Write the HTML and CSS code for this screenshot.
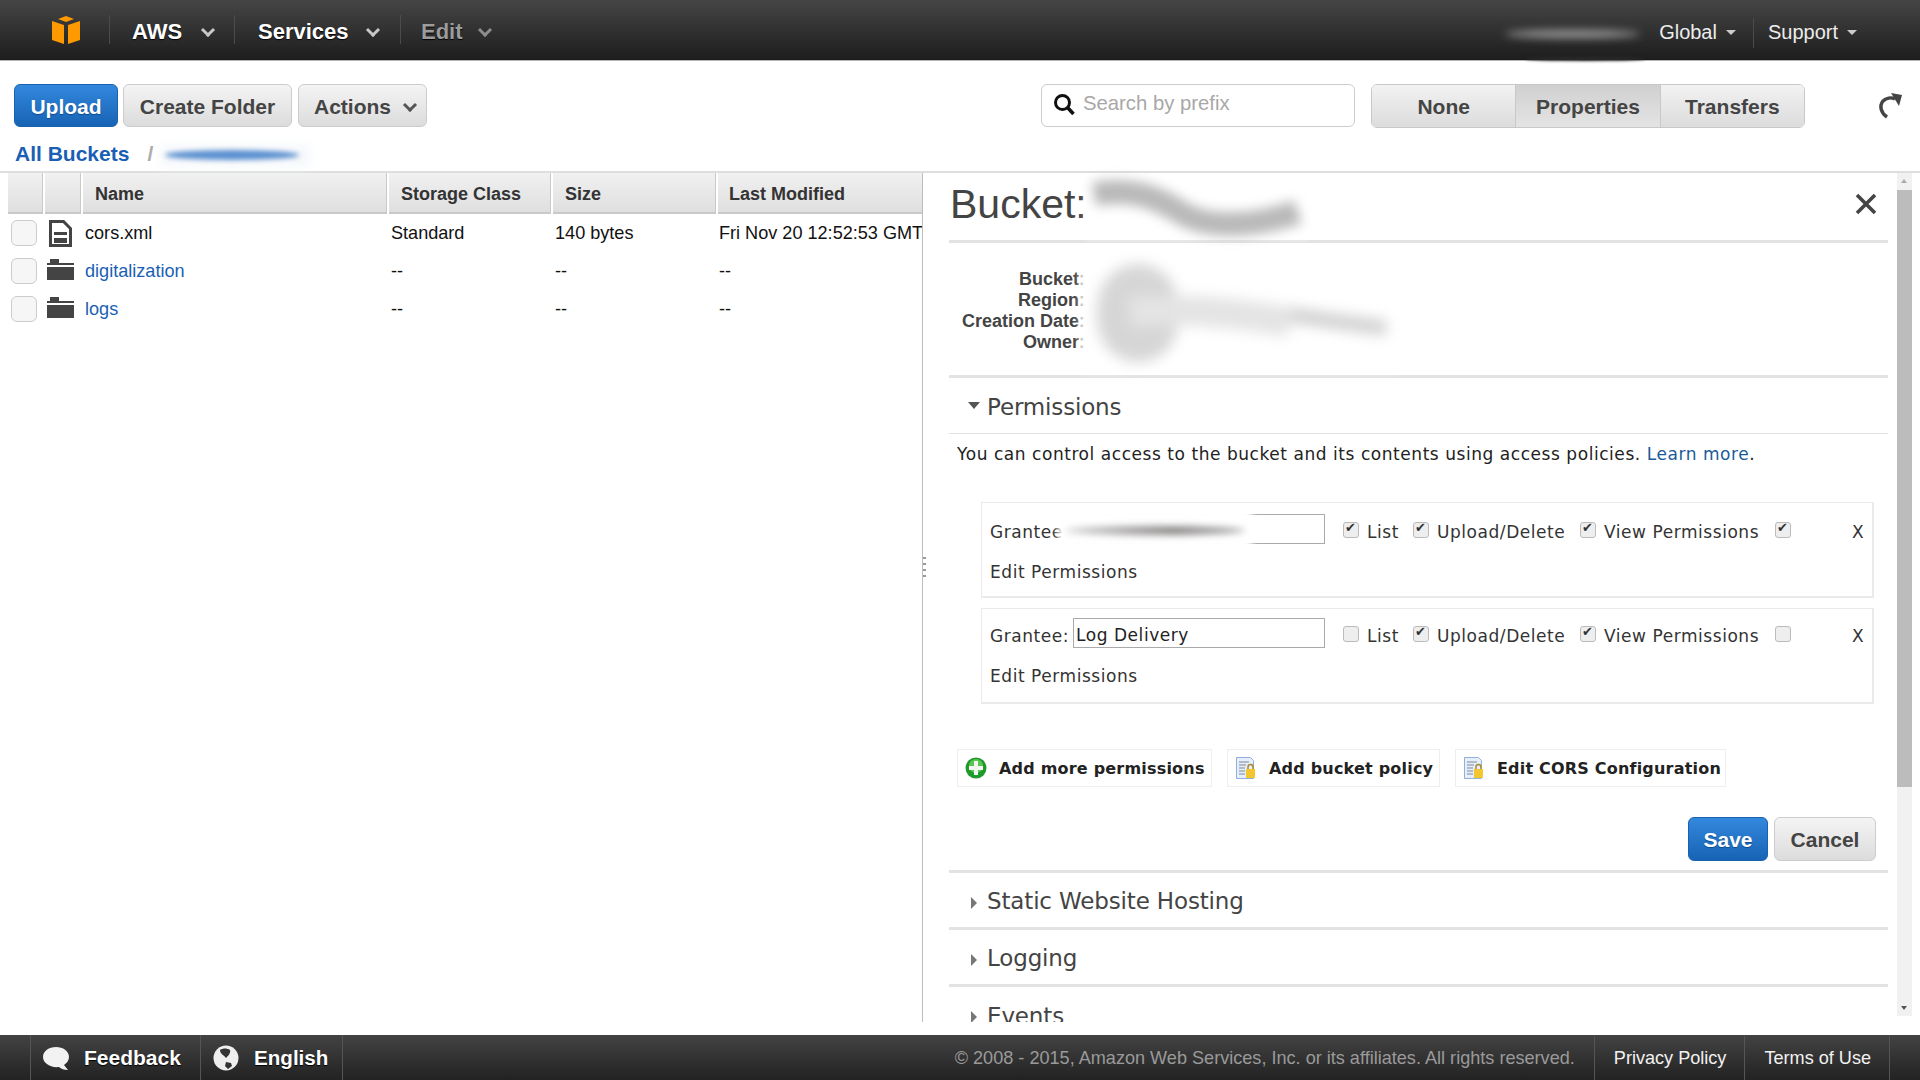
FILE: index.html
```html
<!DOCTYPE html>
<html lang="en">
<head>
    <meta charset="UTF-8">
    <title>S3 Management Console</title>
    <link rel="stylesheet" href="styles.css">
</head>
<body>

<header class="topnav">
    <div class="logo-cell">
        <svg width="32" height="32" viewBox="0 0 32 32"><path d="M8 5 16 2l8 3-8 3z" fill="#f90"/><path d="M2 7 14 11v19L2 26z" fill="#f90"/><path d="M30 7 18 11v19l12-4z" fill="#f90"/></svg>
    </div>
    <div class="nav-item nav-aws">AWS <span class="chev"></span></div>
    <div class="nav-item nav-services">Services <span class="chev"></span></div>
    <div class="nav-item nav-edit">Edit <span class="chev"></span></div>
    <div class="nav-right">
        <div class="nav-small">Global <span class="tri"></span></div>
        <div class="nav-small nav-support">Support <span class="tri"></span></div>
    </div>
</header>

<section class="toolbar">
    <button class="btn btn-blue btn-upload">Upload</button>
    <button class="btn btn-folder">Create Folder</button>
    <button class="btn btn-actions">Actions <span class="chev chev-dark"></span></button>
    <div class="search">
        <svg width="24" height="24" viewBox="0 0 24 24"><circle cx="10.5" cy="10.5" r="7" fill="none" stroke="#111" stroke-width="3"/><path d="m15.5 15.5 6 6.5" stroke="#111" stroke-width="3.5"/></svg>
        <span>Search by prefix</span>
    </div>
    <div class="segmented">
        <div class="seg">None</div>
        <div class="seg seg-on">Properties</div>
        <div class="seg">Transfers</div>
    </div>
    <svg class="refresh" width="26" height="28" viewBox="0 0 26 28"><path d="M10 25C4 21 2 14 6 9c3-3 8-4 12-2" fill="none" stroke="#444" stroke-width="3.5"/><path d="M14 1 25 3l-3 11z" fill="#444"/></svg>
</section>

<div class="crumbs"><a>All Buckets</a><span class="crumb-sep">/</span></div>

<main class="split">
    <section class="files">
        <div class="thead">
            <div></div><div></div>
            <div class="th-name">Name</div>
            <div class="th-pad">Storage Class</div>
            <div class="th-pad">Size</div>
            <div class="th-pad th-last">Last Modified</div>
        </div>
        <div class="row">
            <span class="rowcheck"></span>
            <svg width="23" height="27" viewBox="0 0 23 27"><path d="M1.5 1.5h13l7 7v17h-20z" fill="#fff" stroke="#444" stroke-width="3"/><path d="M5 12h13v3H5zM5 18h13v5H5z" fill="#444"/></svg>
            <div>cors.xml</div>
            <div>Standard</div>
            <div>140 bytes</div>
            <div>Fri Nov 20 12:52:53 GMT</div>
        </div>
        <div class="row">
            <span class="rowcheck"></span>
            <svg class="folder" width="27" height="21" viewBox="0 0 27 21"><path d="M0 4h3V0h9v4h15v2H0zM0 8h27v13H0z" fill="#444"/></svg>
            <div><a>digitalization</a></div>
            <div>--</div>
            <div>--</div>
            <div>--</div>
        </div>
        <div class="row">
            <span class="rowcheck"></span>
            <svg class="folder" width="27" height="21" viewBox="0 0 27 21"><path d="M0 4h3V0h9v4h15v2H0zM0 8h27v13H0z" fill="#444"/></svg>
            <div><a>logs</a></div>
            <div>--</div>
            <div>--</div>
            <div>--</div>
        </div>
    </section>

    <section class="panel">
        <div class="panel-body">
            <div class="panel-head">
                <h1>Bucket:</h1>
                <svg class="close" width="22" height="22" viewBox="0 0 22 22"><path d="m2 2 18 18M20 2 2 20" stroke="#444" stroke-width="3.6"/></svg>
            </div>
            <div class="info">
                <div>Bucket:</div>
                <div>Region:</div>
                <div>Creation Date:</div>
                <div>Owner:</div>
            </div>
            <div class="sect-title sect-open"><span class="tri-down"></span>Permissions</div>
            <p class="intro">You can control access to the bucket and its contents using access policies. <a>Learn more</a>.</p>

            <div class="grantee grantee-first">
                <div class="grantee-line">
                    <label class="g-label">Grantee:</label>
                    <input class="g-input" type="text" value="">
                    <input type="checkbox" class="cb cb-list" checked><span class="g-opt g-list">List</span>
                    <input type="checkbox" class="cb" checked><span class="g-opt g-upload">Upload/Delete</span>
                    <input type="checkbox" class="cb" checked><span class="g-opt g-view">View Permissions</span>
                    <input type="checkbox" class="cb" checked>
                    <span class="g-x">X</span>
                </div>
                <div class="edit-perm">Edit Permissions</div>
            </div>
            <div class="grantee">
                <div class="grantee-line">
                    <label class="g-label">Grantee:</label>
                    <input class="g-input" type="text" value="Log Delivery">
                    <input type="checkbox" class="cb cb-list"><span class="g-opt g-list">List</span>
                    <input type="checkbox" class="cb" checked><span class="g-opt g-upload">Upload/Delete</span>
                    <input type="checkbox" class="cb" checked><span class="g-opt g-view">View Permissions</span>
                    <input type="checkbox" class="cb">
                    <span class="g-x">X</span>
                </div>
                <div class="edit-perm">Edit Permissions</div>
            </div>

            <div class="perm-actions">
                <div class="perm-btn pb-add">
                    <svg width="22" height="22" viewBox="0 0 22 22"><circle cx="11" cy="11" r="10.5" fill="#1f9a2c"/><circle cx="11" cy="9" r="7" fill="#5cc552"/><path d="M9 4h4v5h5v4h-5v5H9v-5H4V9h5z" fill="#f2f7ef"/></svg>
                    Add more permissions
                </div>
                <div class="perm-btn pb-policy">
                    <svg width="22" height="24" viewBox="0 0 22 24"><path d="M1.5 1.5h14l3 3v18h-17z" fill="#e6eefa" stroke="#8fb0de"/><path d="M4 6h10M4 9h7M4 12h6M4 15h6M4 18h6" stroke="#7c8898"/><path d="M13 13v-2a2.5 2.5 0 0 1 5 0v2" fill="none" stroke="#a98a2c" stroke-width="1.5"/><path d="M11 13h9v9h-9z" fill="#f3c52e"/></svg>
                    Add bucket policy
                </div>
                <div class="perm-btn pb-cors">
                    <svg width="22" height="24" viewBox="0 0 22 24"><path d="M1.5 1.5h14l3 3v18h-17z" fill="#e6eefa" stroke="#8fb0de"/><path d="M4 6h10M4 9h7M4 12h6M4 15h6M4 18h6" stroke="#7c8898"/><path d="M13 13v-2a2.5 2.5 0 0 1 5 0v2" fill="none" stroke="#a98a2c" stroke-width="1.5"/><path d="M11 13h9v9h-9z" fill="#f3c52e"/></svg>
                    Edit CORS Configuration
                </div>
            </div>

            <div class="save-row">
                <button class="btn btn-blue btn-save">Save</button>
                <button class="btn btn-cancel">Cancel</button>
            </div>

            <div class="sect-title sect-closed"><span class="tri-right"></span>Static Website Hosting</div>
            <div class="sect-title sect-closed"><span class="tri-right"></span>Logging</div>
            <div class="sect-title sect-closed sect-last"><span class="tri-right"></span>Events</div>
        </div>
        <div class="scrollbar">
            <span class="sb-up"></span>
            <div class="sb-thumb"></div>
            <span class="sb-down"></span>
        </div>
    </section>
</main>

<footer class="foot">
    <div class="foot-item foot-feedback">
        <svg width="27" height="25" viewBox="0 0 27 25"><path d="M13 1c7 0 13 4 13 10 0 3-2 6-5 8l4 5c-4 0-7-1-9-3-9 1-16-4-16-10C0 5 6 1 13 1z" fill="#f2f2f2"/></svg>
        Feedback
    </div>
    <div class="foot-item foot-lang">
        <svg width="26" height="26" viewBox="0 0 26 26"><circle cx="13" cy="13" r="12.5" fill="#eee"/><path d="M7 5c3-2 7-2 10 0 1 3-2 6-4 8-2-3-6-4-6-8zM13 17l5 1 1 3-4 3-3-3z" fill="#333"/></svg>
        English
    </div>
    <div class="foot-right">
        <div class="copy">© 2008 - 2015, Amazon Web Services, Inc. or its affiliates. All rights reserved.</div>
        <div class="foot-link foot-privacy">Privacy Policy</div>
        <div class="foot-link foot-terms">Terms of Use</div>
    </div>
</footer>

<!-- smudges lying over the account names -->
<div class="smudge sm-nav"></div>
<div class="smudge sm-nav2"></div>
<div class="smudge sm-crumb-halo"></div>
<div class="smudge sm-crumb"></div>
<div class="smudge sm-head-white"></div>
<svg class="smudge sm-head" width="230" height="70" viewBox="0 0 230 70"><path d="M14 18C50 12 75 20 100 36s70 16 118 0" fill="none" stroke="#b9b9b9" stroke-width="24"/></svg>
<div class="smudge sm-info-white"></div>
<svg class="smudge sm-info" width="340" height="120" viewBox="0 0 340 120"><path d="M68 46c-2 6-2 12 0 18" fill="none" stroke="#d6d6d6" stroke-width="80" stroke-linecap="round"/><path d="M70 46c60-6 120 8 246 24" fill="none" stroke="#cfcdcd" stroke-width="14"/><path d="M60 54c60-4 100 0 160 10" fill="none" stroke="#e4e4e4" stroke-width="30"/></svg>
<div class="smudge sm-grantee-white"></div>
<div class="smudge sm-grantee"></div>
<div class="drag-dots"></div>

</body>
</html>
```

FILE: styles.css
```css
* { box-sizing: border-box; }
html, body { margin: 0; height: 100%; }
body { display: flex; flex-direction: column; height: 1080px; overflow: hidden; font-family: "Liberation Sans", Arial, sans-serif; font-size: 18px; color: #111; background: #fff; position: relative; }
a { color: #1a5fb4; text-decoration: none; }

/* top bar */
.topnav { display: flex; align-items: stretch; height: 61px; flex: none; padding-bottom: 1px; background: linear-gradient(#454545, #1d1d1d); border-bottom: 1px solid #b5b5b5; color: #fff; }
.logo-cell { width: 109px; display: flex; align-items: center; padding-left: 50px; }
.nav-item { display: flex; align-items: center; margin: 15px 0; padding-top: 5px; font-size: 22px; font-weight: bold; border-left: 1px solid #4b4b4b; text-shadow: 0 1px 1px #000; }
.nav-aws { width: 125px; padding-left: 22px; gap: 21px; }
.nav-services { width: 166px; padding-left: 23px; gap: 19px; }
.nav-edit { width: 120px; padding-left: 20px; gap: 17px; color: #9c9c9c; }
.chev { display: inline-block; width: 10px; height: 10px; margin-top: -4px; border-right: 3px solid #c8c8c8; border-bottom: 3px solid #c8c8c8; transform: rotate(45deg); }
.nav-edit .chev { border-color: #8d8d8d; }
.chev-dark { border-color: #555; margin-left: 8px; margin-top: 0; vertical-align: 4px; }
.nav-right { margin-left: auto; display: flex; align-items: center; margin-right: 63px; padding-top: 6px; }
.nav-small { display: flex; align-items: center; gap: 9px; height: 30px; font-size: 20px; color: #ececec; padding-right: 17px; }
.nav-support { border-left: 1px solid #4b4b4b; padding-left: 14px; padding-right: 0; }
.tri { width: 0; height: 0; border-left: 5px solid transparent; border-right: 5px solid transparent; border-top: 5px solid #ccc; }

/* toolbar */
.toolbar { display: flex; align-items: center; height: 43px; margin-top: 23px; padding-left: 14px; flex: none; }
.btn { height: 43px; border-radius: 6px; font-family: inherit; font-size: 21px; font-weight: bold; color: #444; padding: 3px 0 0; background: linear-gradient(#f4f4f4, #dcdcdc); border: 1px solid #ccc; }
.btn-blue { color: #fff; background: linear-gradient(#3388dd, #1763b5); border-color: #1a62b0; text-shadow: 0 1px 1px #0d4a8c; }
.btn-upload { width: 104px; }
.btn-folder { width: 169px; margin-left: 5px; }
.btn-actions { width: 129px; margin-left: 6px; text-align: left; padding-left: 15px; }
.search { display: flex; align-items: center; gap: 7px; width: 314px; height: 43px; margin-left: 614px; padding: 0 0 4px 10px; border: 1px solid #ccc; border-radius: 6px; font-size: 20.3px; color: #a8a8a8; }
.segmented { display: flex; width: 434px; height: 44px; margin-left: 16px; border: 1px solid #c8c8c8; border-radius: 6px; overflow: hidden; }
.seg { flex: 1; display: flex; align-items: center; justify-content: center; padding-top: 3px; font-size: 21px; font-weight: bold; color: #444; background: linear-gradient(#f2f2f2, #dcdcdc); border-left: 1px solid #c8c8c8; }
.seg:first-child { border-left: none; }
.seg-on { background: linear-gradient(#d0d0d0, #e4e4e4); }
.refresh { margin-left: 72px; }

.crumbs { flex: none; height: 44px; padding: 14px 0 0 15px; font-size: 21px; font-weight: bold; line-height: 25px; }
.crumb-sep { margin-left: 18px; color: #aaa; }

/* main split */
.split { display: flex; height: 851px; flex: none; border-top: 2px solid #dedede; }
.files { width: 923px; flex: none; padding-left: 8px; border-right: 1px solid #bdbdbd; overflow: hidden; white-space: nowrap; font-size: 18.1px; }
.thead { display: grid; grid-template-columns: 37px 38px 306px 164px 165px 204px; height: 41px; padding-top: 2px; background: linear-gradient(#f1f1f1, #dfdfdf); border-bottom: 2px solid #c9c9c9; font-size: 18px; font-weight: bold; color: #333; line-height: 39px; }
.thead > div { margin-top: -2px; border-right: 2px solid #fff; box-shadow: inset -1px 0 0 #c9c9c9; padding-top: 2px; }
.thead > .th-last { border-right: none; box-shadow: none; padding-left: 11px; }
.th-name { padding-left: 12px; }
.th-pad { padding-left: 12px; }
.row { display: grid; grid-template-columns: 39px 38px 306px 164px 164px 300px; align-items: center; height: 38px; }
.rowcheck { display: block; width: 26px; height: 26px; margin-left: 3px; background: #f6f6f6; border: 1px solid #ccc; border-radius: 6px; }
.row svg { margin-left: 2px; }
.row svg.folder { margin-left: 0; margin-top: -4px; }

/* properties panel */
.panel { flex: 1; display: flex; overflow: hidden; height: 849px; }
.panel-body { width: 939px; margin-left: 26px; flex: none; overflow: hidden; font-family: "DejaVu Sans", Verdana, sans-serif; font-size: 17px; letter-spacing: 0.55px; color: #333; }
.panel-head { display: flex; justify-content: space-between; align-items: center; height: 70px; padding: 0 11px 5px 1px; border-bottom: 3px solid #e2e2e2; }
.panel-head h1 { margin: 0; font-family: "Liberation Sans", Arial, sans-serif; font-size: 41px; font-weight: normal; letter-spacing: 0; color: #444; }
.info { height: 135px; padding-top: 26px; border-bottom: 3px solid #e2e2e2; font-family: "Liberation Sans", Arial, sans-serif; font-size: 18px; font-weight: bold; letter-spacing: 0; line-height: 21px; color: #444; }
.info div { width: 136px; text-align: right; }
.sect-title { display: flex; align-items: center; font-size: 23px; letter-spacing: -0.15px; color: #444; padding: 2px 0 0 38px; position: relative; }
.sect-open { height: 56px; border-bottom: 1px solid #e2e2e2; }
.sect-closed { height: 57px; border-bottom: 3px solid #e2e2e2; }
.sect-last { border-bottom: none; height: 52px; padding-top: 6px; }
.tri-down { position: absolute; left: 19px; top: 24px; width: 0; height: 0; border-left: 6px solid transparent; border-right: 6px solid transparent; border-top: 7px solid #555; }
.tri-right { position: absolute; left: 22px; top: 24px; width: 0; height: 0; border-top: 6px solid transparent; border-bottom: 6px solid transparent; border-left: 6px solid #777; }
.intro { margin: 0; padding: 9px 0 0 8px; height: 68px; line-height: 22px; color: #222; white-space: nowrap; }
.intro a { color: #1a5a9a; }
.grantee { height: 96px; margin: 0 14px 10px 32px; padding: 9px 0 0 8px; border: 1px solid #eaeaea; border-width: 1px 2px 2px 1px; }
.grantee-first { padding-top: 11px; }
.grantee-line { display: flex; align-items: center; height: 30px; }
.g-label { width: 83px; padding-top: 5px; color: #333; white-space: nowrap; }
.g-input { width: 252px; height: 30px; padding: 3px 2px 0; border: 1px solid #aaa; font-family: inherit; font-size: 17px; letter-spacing: 0.55px; color: #222; outline: none; }
.cb { appearance: none; width: 16px; height: 16px; margin: 2px 0 0; flex: none; position: relative; background: #eee; border: 1px solid #bbb; border-radius: 3px; }
.cb:checked::after { content: "✔"; position: absolute; left: 1px; top: -3px; font-size: 13px; letter-spacing: 0; color: #333; }
.cb-list { margin-left: 18px; }
.g-opt { padding: 5px 0 0 8px; color: #333; white-space: nowrap; }
.g-list { width: 54px; }
.g-upload { width: 151px; }
.g-view { width: 179px; }
.g-x { margin-left: 61px; padding-top: 5px; }
.edit-perm { margin-top: 17px; line-height: 22px; color: #333; }
.perm-actions { display: flex; gap: 15px; height: 38px; margin: 45px 0 0 8px; }
.perm-btn { display: flex; align-items: center; height: 38px; padding: 0 4px 0 7px; border: 1px solid #eee; font-size: 16px; letter-spacing: 0.2px; font-weight: bold; color: #222; white-space: nowrap; }
.pb-add { width: 255px; gap: 12px; }
.pb-policy { width: 213px; gap: 12px; }
.pb-cors { width: 271px; gap: 12px; }
.save-row { display: flex; justify-content: flex-end; gap: 6px; height: 56px; padding-right: 12px; margin-top: 30px; border-bottom: 3px solid #e2e2e2; }
.btn-save { width: 80px; height: 44px; padding-top: 1px; letter-spacing: 0; font-family: "Liberation Sans", Arial, sans-serif; }
.btn-cancel { width: 102px; height: 44px; padding-top: 1px; letter-spacing: 0; font-family: "Liberation Sans", Arial, sans-serif; }
.scrollbar { width: 15px; margin-left: 9px; flex: none; height: 843px; position: relative; background: #f1f1f1; }
.sb-thumb { position: absolute; left: 0; right: 0; top: 17px; height: 597px; background: #bcbcbc; }
.sb-up, .sb-down { position: absolute; left: 4px; width: 0; height: 0; border-left: 3px solid transparent; border-right: 3px solid transparent; }
.sb-up { top: 6px; border-bottom: 4px solid #aaa; }
.sb-down { bottom: 6px; border-top: 4px solid #555; }

/* footer */
.foot { display: flex; align-items: center; height: 45px; margin-top: 13px; flex: none; background: linear-gradient(#434343, #222); color: #fff; font-size: 20.6px; font-weight: bold; }
.foot-item { display: flex; align-items: center; height: 45px; padding-top: 1px; border-left: 1px solid #555; text-shadow: 0 1px 1px #000; }
.foot-feedback { margin-left: 30px; width: 170px; padding-left: 12px; gap: 14px; font-size: 21px; }
.foot-lang { width: 143px; padding-left: 12px; gap: 15px; border-right: 1px solid #555; }
.foot-right { margin-left: auto; display: flex; align-items: center; height: 45px; padding-top: 1px; margin-right: 30px; font-weight: normal; font-size: 18.1px; }
.copy { color: #9a9a9a; padding-right: 19px; white-space: nowrap; }
.foot-link { display: flex; align-items: center; height: 45px; padding: 0 18px 0 19px; border-left: 1px solid #555; color: #f2f2f2; white-space: nowrap; }
.foot-terms { border-right: 1px solid #555; }

/* smudges and the resize grip lie over the content */
.smudge { position: absolute; filter: blur(4px); pointer-events: none; }
.sm-nav { left: 1505px; top: 30px; width: 135px; height: 8px; background: #9a9a9a; border-radius: 50%; }
.sm-nav2 { left: 1525px; top: 57px; width: 120px; height: 4px; background: #2a2a2a; border-radius: 50%; filter: blur(1.5px); }
.sm-crumb-halo { left: 160px; top: 145px; width: 150px; height: 22px; background: #f6f8fb; filter: blur(5px); }
.sm-crumb { left: 165px; top: 150px; width: 134px; height: 10px; background: #5a8fd0; border-radius: 50%; filter: blur(2.5px); }
.sm-head-white { left: 1086px; top: 180px; width: 222px; height: 58px; background: #fff; filter: blur(3px); }
.sm-head { left: 1080px; top: 176px; filter: blur(6px); }
.sm-info-white { left: 1080px; top: 250px; width: 320px; height: 122px; background: #fff; filter: blur(3px); }
.sm-info { left: 1070px; top: 258px; filter: blur(7px); }
.sm-grantee-white { left: 1058px; top: 508px; width: 194px; height: 42px; background: #fff; filter: blur(3px); }
.sm-grantee { left: 1065px; top: 526px; width: 180px; height: 9px; background: linear-gradient(90deg, #d0d0d0, #8a8686 60%, #a8a8a8); border-radius: 50%; filter: blur(3.5px); }
.drag-dots { position: absolute; left: 923px; top: 557px; width: 3px; height: 20px; background: repeating-linear-gradient(#999 0 2px, #fff 2px 6px); }
```
